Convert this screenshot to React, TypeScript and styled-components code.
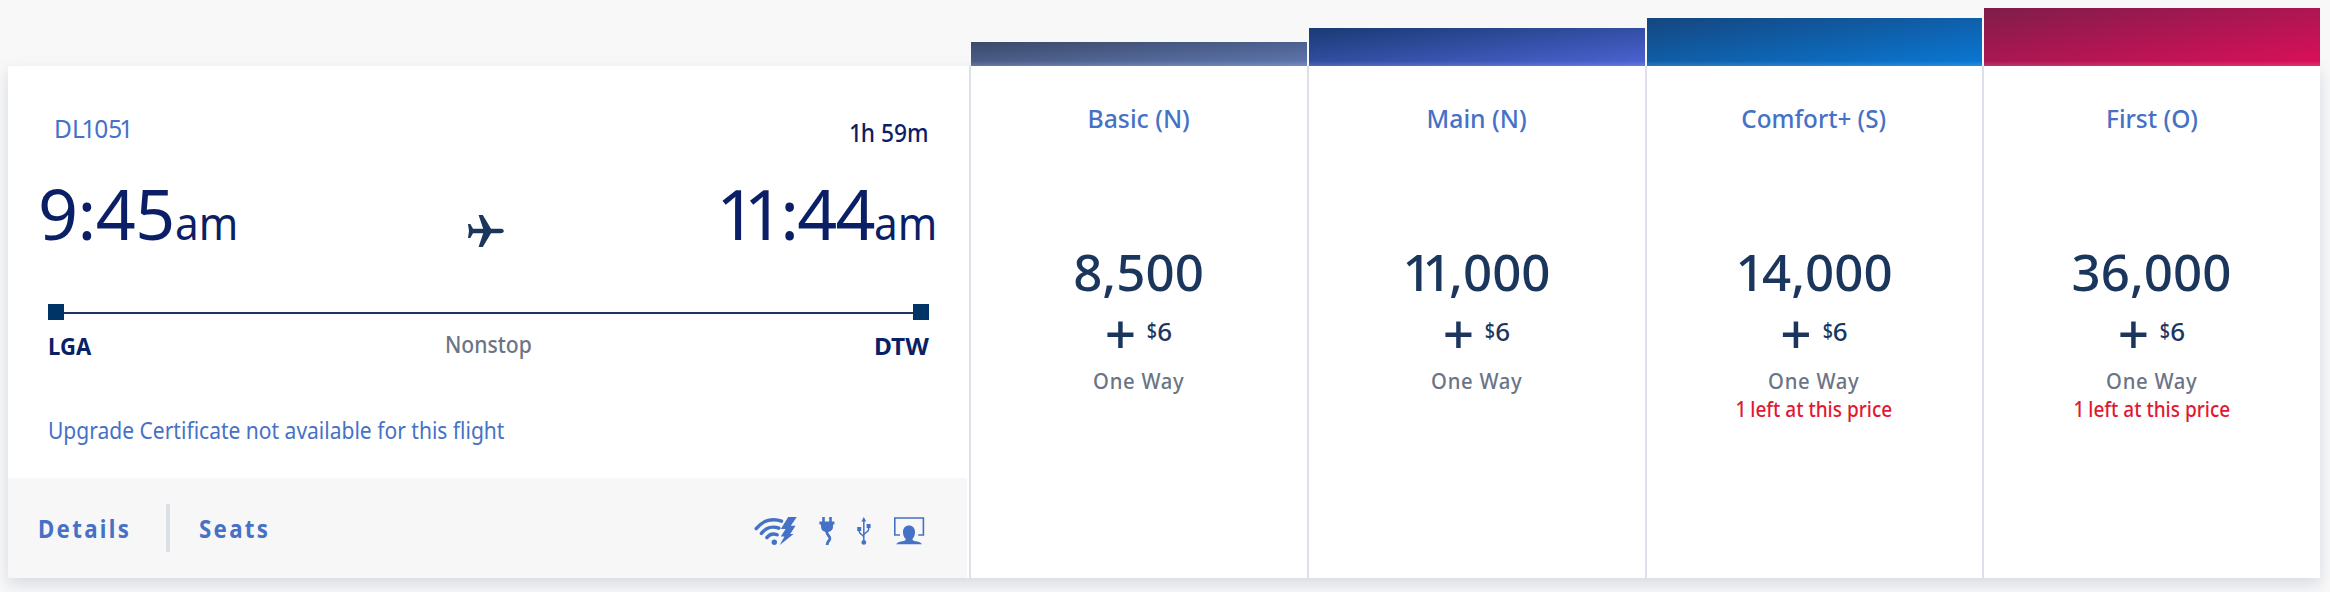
import React from 'react';
import styled, { createGlobalStyle } from 'styled-components';

const GlobalStyle = createGlobalStyle`
  * { box-sizing: border-box; }
  html, body { margin: 0; padding: 0; }
  body {
    background: #f8f8f8;
    font-family: "Noto Sans", "Open Sans", sans-serif;
    height: 592px;
    overflow: hidden;
  }
`;

const Page = styled.main`
  display: flex;
  align-items: flex-end;
  width: 2330px;
  height: 592px;
  padding: 0 10px 14px 8px;
`;

const Card = styled.article`
  display: flex;
  width: 2312px;
  height: 512px;
  background: #fff;
  box-shadow: 0 6px 14px rgba(120, 135, 165, 0.26);
`;

const Flight = styled.section`
  display: flex;
  flex-direction: column;
  width: 961px;
  padding-right: 2px;
  height: 512px;
`;

const FlightBody = styled.div`
  padding: 42px 38px 0 40px;
`;

/* Horizontally condensed run of text, pinned at one side of its box. */
const Condensed = styled.span<{ $scale: number; $from?: string }>`
  display: inline-block;
  white-space: nowrap;
  transform: scaleX(${p => p.$scale});
  transform-origin: ${p => p.$from ?? 'left'} center;
`;

/* The figure 1 set proportionally instead of on the tabular width. */
const NarrowOne = styled.span<{ $first: boolean }>`
  margin-left: ${p => (p.$first ? 0 : '-0.13em')};
  letter-spacing: -0.05em;
`;

const Header = styled.div`
  display: flex;
  justify-content: space-between;
  height: 65px;
  font-size: 25px;
  line-height: 40px;
`;

const FlightNumber = styled.a`
  margin-left: 6px;
  color: #4571c6;
`;

const Duration = styled.span`
  padding-top: 4px;
  color: #0b1f66;
  font-weight: 500;
`;

const Times = styled.div`
  display: flex;
  justify-content: space-between;
  height: 80px;
  margin: 0 -12px 0 -10px;
  color: #0b1f66;
  font-size: 70px;
  line-height: 80px;
`;

const Time = styled.div`
  display: flex;
  align-items: baseline;
  white-space: nowrap;
`;

const Clock = styled.span<{ $tracking: number }>`
  letter-spacing: ${p => p.$tracking}px;
`;

const Meridiem = styled.span`
  font-size: 45px;
`;

const PlaneIcon = styled.svg`
  width: 36px;
  height: 34px;
  margin: 41px 0 0 13px;
`;

const Track = styled.div`
  display: flex;
  align-items: center;
  justify-content: space-between;
  height: 16px;
  margin-top: 51px;
  background: linear-gradient(#1b365d, #1b365d) 0 8px / 100% 2px no-repeat;
`;

const Stop = styled.span`
  width: 16px;
  height: 16px;
  background: #003366;
`;

const Airports = styled.div`
  display: grid;
  grid-template-columns: 1fr auto 1fr;
  height: 30px;
  margin-top: 11px;
  color: #0b1f66;
  font-size: 24px;
  line-height: 30px;
`;

const Airport = styled.strong<{ $end?: boolean }>`
  font-weight: 700;
  text-align: ${p => (p.$end ? 'right' : 'left')};
`;

const StopCount = styled.span`
  margin-top: -2px;
  color: #6b7485;
  font-weight: 500;
`;

const Notice = styled.div`
  margin-top: 54px;
  color: #4571c6;
  font-size: 24px;
  line-height: 30px;
`;

const Footer = styled.footer`
  display: flex;
  align-items: center;
  height: 100px;
  margin-top: auto;
  padding: 0 42px 0 30px;
  background: #f7f7f7;
`;

const FooterLink = styled.a<{ $width: number }>`
  width: ${p => p.$width}px;
  color: #4571c6;
  font-size: 25px;
  font-weight: 700;
  letter-spacing: 2.6px;
  line-height: 40px;
`;

const Divider = styled.span`
  width: 4px;
  height: 48px;
  margin-right: 29px;
  background: #dce1e8;
`;

const Amenities = styled.div`
  display: flex;
  align-items: center;
  margin-left: auto;
`;

const AmenityIcon = styled.svg<{ $gap?: number }>`
  display: block;
  height: 28px;
  margin-left: ${p => p.$gap ?? 0}px;
  margin-top: 5px;
`;

const Fare = styled.section<{ $width: number }>`
  display: flex;
  flex-direction: column;
  justify-content: flex-end;
  align-self: flex-end;
  width: ${p => p.$width}px;
  flex: none;
`;

const Band = styled.div<{ $height: number; $from: string; $to: string }>`
  height: ${p => p.$height}px;
  margin-left: 2px;
  background:
    linear-gradient(rgba(255, 255, 255, 0), rgba(255, 255, 255, 0.14)) left bottom / 100% 5px no-repeat,
    linear-gradient(to bottom right, ${p => p.$from}, ${p => p.$to});
`;

const FareBody = styled.div`
  display: flex;
  flex-direction: column;
  align-items: center;
  height: 512px;
  padding: 32px 1px 0 0;
  border-left: 2px solid #dce1e9;
`;

const Cabin = styled.a`
  color: #4571c6;
  font-size: 25px;
  font-weight: 500;
  line-height: 40px;
`;

const Miles = styled.div`
  margin-top: 103px;
  color: #1b365d;
  font-size: 51px;
  font-weight: 500;
  line-height: 60px;
  white-space: nowrap;
`;

const Taxes = styled.div`
  display: flex;
  height: 30px;
  margin-top: 15px;
  color: #1b365d;
  font-weight: 500;
  font-size: 26px;
  line-height: 30px;
`;

const Plus = styled.span`
  margin: 2px 9px 0 0;
  font-size: 55px;
`;

const Currency = styled.span`
  display: block;
  margin-top: -1px;
  font-size: 21px;
`;

const TripType = styled.div`
  margin-top: 21px;
  color: #6b7485;
  font-size: 22.5px;
  font-weight: 500;
  letter-spacing: 0.8px;
  line-height: 28px;
`;

const SeatsLeft = styled.div`
  color: #e01933;
  font-size: 22.5px;
  font-weight: 500;
  line-height: 28px;
`;

function Digits({ children }: { children: string }) {
  return (
    <>
      {children.split(/(1)/).map((part, i, all) =>
        part === '1' ? (
          <NarrowOne key={i} $first={i === 1 && all[0] === ''}>1</NarrowOne>
        ) : (
          part
        ),
      )}
    </>
  );
}

interface FareInfo {
  cabin: string;
  cabinScale: number;
  miles: string;
  seatsLeft?: string;
  width: number;
  band: number;
  from: string;
  to: string;
}

const fares: FareInfo[] = [
  { cabin: 'Basic (N)', cabinScale: 0.99, miles: '8,500', width: 338, band: 24, from: '#3b4969', to: '#6079b3' },
  { cabin: 'Main (N)', cabinScale: 0.99, miles: '11,000', width: 338, band: 38, from: '#1a3a73', to: '#4c64d6' },
  { cabin: 'Comfort+ (S)', cabinScale: 0.97, miles: '14,000', seatsLeft: '1 left at this price', width: 337, band: 48, from: '#15467f', to: '#0979d6' },
  { cabin: 'First (O)', cabinScale: 0.98, miles: '36,000', seatsLeft: '1 left at this price', width: 338, band: 58, from: '#7f1d4a', to: '#dc0f5a' },
];

const blue = '#4571c6';

export default function App() {
  return (
    <>
      <GlobalStyle />
      <Page>
        <Card>
          <Flight>
            <FlightBody>
              <Header>
                <FlightNumber><Condensed $scale={0.98}><Digits>DL1051</Digits></Condensed></FlightNumber>
                <Duration><Condensed $scale={0.91} $from="right"><Digits>1h 59m</Digits></Condensed></Duration>
              </Header>
              <Times>
                <Time><Clock $tracking={-0.5}>9:45</Clock><Meridiem><Condensed $scale={0.94}>am</Condensed></Meridiem></Time>
                <PlaneIcon viewBox="0 0 36 34">
                  <path fill="#1b365d" d="M0 10h2.3L5 14.8h10.2L10.6 1h4.2L23 14.8h9.2c2 0 3.6.6 3.6 2.2s-1.6 2.2-3.6 2.2H23L14.8 33h-4.2l4.6-13.8H5L2.3 24H0l1-7z" />
                </PlaneIcon>
                <Time><Clock $tracking={-1.8}><Digits>11:44</Digits></Clock><Meridiem><Condensed $scale={0.94}>am</Condensed></Meridiem></Time>
              </Times>
              <Track><Stop /><Stop /></Track>
              <Airports>
                <Airport><Condensed $scale={0.92}>LGA</Condensed></Airport>
                <StopCount><Condensed $scale={0.88} $from="center">Nonstop</Condensed></StopCount>
                <Airport $end><Condensed $scale={1.02} $from="right">DTW</Condensed></Airport>
              </Airports>
              <Notice><Condensed $scale={0.876}>Upgrade Certificate not available for this flight</Condensed></Notice>
            </FlightBody>
            <Footer>
              <FooterLink $width={128}><Condensed $scale={0.89}>Details</Condensed></FooterLink>
              <Divider />
              <FooterLink $width={100}><Condensed $scale={0.89}>Seats</Condensed></FooterLink>
              <Amenities>
                <AmenityIcon width="44" viewBox="0 0 44 28">
                  <g fill="none" stroke={blue} strokeWidth="3.4" strokeLinecap="round">
                    <path d="M2.2 11.6C9 3.2 19 .8 27.5 4.2" />
                    <path d="M7.4 16.4c4.6-6 11.4-7.6 17.4-5.2" />
                    <path d="M12.8 20.6c2.8-3.6 6.8-4.4 10.4-2.8" />
                  </g>
                  <circle cx="20.3" cy="25.2" r="2.7" fill={blue} />
                  <path fill={blue} d="M34.2 0h8.6l-6 8.8h4.8l-5.4 8.2h3.4L25.8 28l4.6-8.6H26.8l4.8-7.4h-4.8z" />
                </AmenityIcon>
                <AmenityIcon $gap={21} width="16" viewBox="0 0 16 28">
                  <path fill={blue} d="M3.2 0h2.6v4.6h4.4V0h2.6v4.6h2.6v2.8H14v2.4c0 2.8-1.8 4.6-4.6 5.2H6.6C3.8 14.4 2 12.6 2 9.8V7.4H.4V4.6h2.8z" />
                  <path fill="none" stroke={blue} strokeWidth="2.8" d="M7.8 14c-.6 4.6 3.6 4.2 3 8-.4 2.2-2.8 2.2-2.6 6" />
                </AmenityIcon>
                <AmenityIcon $gap={22} width="14" viewBox="0 0 14 28">
                  <path fill="none" stroke={blue} strokeWidth="1.5" d="M6.8 3v22M2.2 12v2.6c0 3 4.6 2.6 4.6 6M11.6 9v3.4c0 3.4-4.8 2.6-4.8 6" />
                  <path fill={blue} d="M6.8 0l2.4 4.6H4.4zM9.6 7h4v4h-4zM.2 10h4v4h-4z" />
                  <circle cx="6.8" cy="25.4" r="2.4" fill={blue} />
                </AmenityIcon>
                <AmenityIcon $gap={22} width="32" viewBox="0 0 32 28">
                  <path fill="none" stroke={blue} strokeWidth="1.6" d="M7 18H1.8V1h28.6v17h-5.2" />
                  <path fill={blue} d="M16 8.6c3.6 0 6 2.6 6 6.4 0 3-1 5.4-2.6 7 .2 1.6 1 1.8 3.6 2.2 3.2.4 5 1.4 6 3H3.2c1-1.6 2.8-2.6 6-3 2.6-.4 3.4-.6 3.6-2.2C11 20.4 10 18 10 15c0-3.8 2.4-6.4 6-6.4z" />
                </AmenityIcon>
              </Amenities>
            </Footer>
          </Flight>
          {fares.map(f => (
            <Fare key={f.cabin} $width={f.width}>
              <Band $height={f.band} $from={f.from} $to={f.to} />
              <FareBody>
                <Cabin><Condensed $scale={f.cabinScale} $from="center">{f.cabin}</Condensed></Cabin>
                <Miles><Digits>{f.miles}</Digits></Miles>
                <Taxes>
                  <Plus>+</Plus>
                  <Condensed $scale={0.85} $from="right"><Currency>$</Currency></Condensed>
                  <span>6</span>
                </Taxes>
                <TripType><Condensed $scale={0.9} $from="center">One Way</Condensed></TripType>
                {f.seatsLeft && (
                  <SeatsLeft><Condensed $scale={0.845} $from="center"><Digits>{f.seatsLeft}</Digits></Condensed></SeatsLeft>
                )}
              </FareBody>
            </Fare>
          ))}
        </Card>
      </Page>
    </>
  );
}
